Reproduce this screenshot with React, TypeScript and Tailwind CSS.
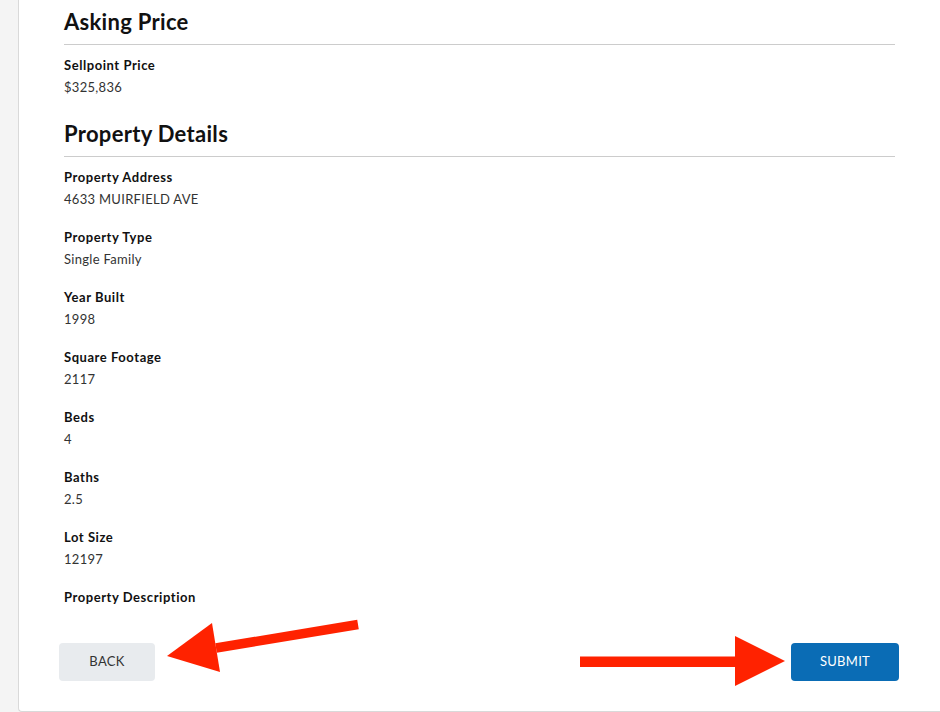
import React from "react";

const fields: [string, string][] = [
  ["Property Address", "4633 MUIRFIELD AVE"],
  ["Property Type", "Single Family"],
  ["Year Built", "1998"],
  ["Square Footage", "2117"],
  ["Beds", "4"],
  ["Baths", "2.5"],
  ["Lot Size", "12197"],
  ["Property Description", ""],
];

function Label({ children }: { children: React.ReactNode }) {
  return <div className="text-[13px] leading-[22px] font-bold tracking-[0.55px] text-[#111]">{children}</div>;
}

function Value({ children }: { children: React.ReactNode }) {
  return <div className="h-[22px] text-[13px] leading-[23px] tracking-[0.3px] text-[#333]">{children}</div>;
}

function Field({ label, value }: { label: string; value: string }) {
  return (
    <div className="mb-4">
      <Label>{label}</Label>
      <Value>{value}</Value>
    </div>
  );
}

function Heading({ children }: { children: React.ReactNode }) {
  return (
    <div className="mb-[9px] border-b border-[#cccccc] pb-2">
      <h2 className="text-[22px] leading-[28px] font-bold tracking-[0.3px] text-[#111]">{children}</h2>
    </div>
  );
}

export default function App() {
  return (
    <div
      className="relative flex h-[712px] w-[940px] overflow-hidden bg-[#f4f4f4]"
      style={{ fontFamily: "Lato, 'Noto Sans', Arial, sans-serif" }}
    >
      <div className="ml-[18px] flex h-[712px] flex-1 flex-col rounded-bl-[4px] border-b border-l border-[#d9d9d9] bg-white">
        <div className="px-[45px] pt-2">
          <Heading>Asking Price</Heading>
          <div className="mb-[22px]">
            <Label>Sellpoint Price</Label>
            <Value>$325,836</Value>
          </div>
          <Heading>Property Details</Heading>
          {fields.map(([l, v]) => (
            <Field key={l} label={l} value={v} />
          ))}
        </div>
        <div className="-mt-[3px] flex items-center justify-between pl-[40px] pr-[41px]">
          <button className="h-[38px] w-[96px] rounded-[4px] bg-[#e8ebee] text-[13px] tracking-[0.3px] text-[#333]">
            BACK
          </button>
          <button className="h-[38px] w-[108px] rounded-[4px] bg-[#0a6cb5] text-[13px] tracking-[0.3px] text-white">
            SUBMIT
          </button>
        </div>
      </div>
      <svg className="pointer-events-none absolute left-0 top-0" width="940" height="712">
        <line x1="216" y1="648" x2="358" y2="624.5" stroke="#ff2200" strokeWidth="9.5" />
        <polygon points="167,656 212,623 220,672" fill="#ff2200" />
        <rect x="580" y="656.5" width="157" height="10.5" fill="#ff2200" />
        <polygon points="735,636 735,686 785,661" fill="#ff2200" />
      </svg>
    </div>
  );
}
